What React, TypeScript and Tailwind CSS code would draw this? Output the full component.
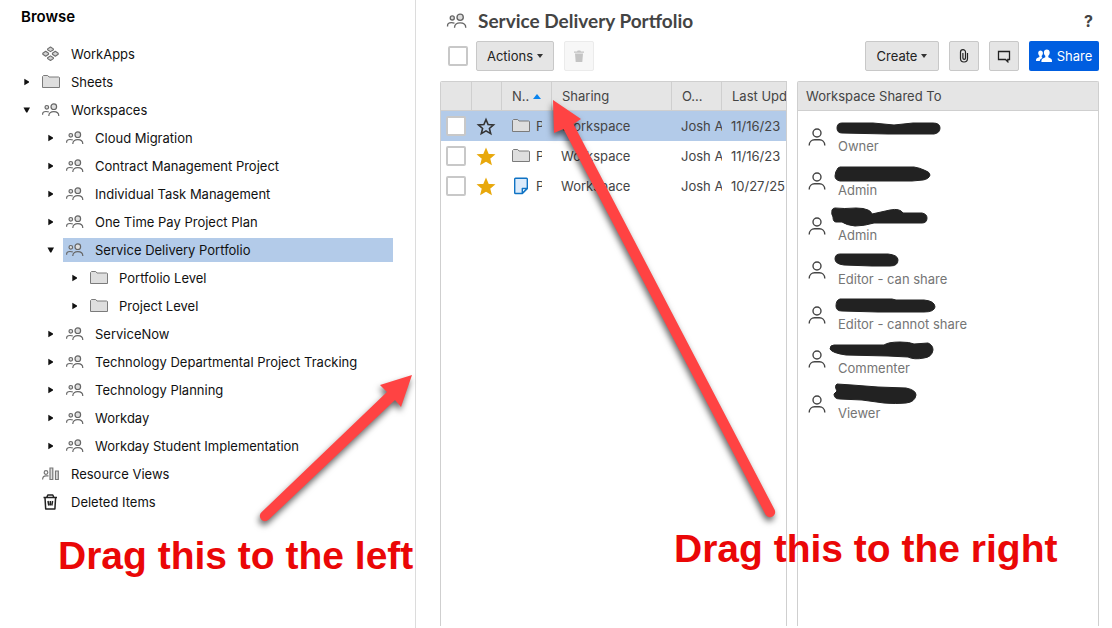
import { ReactNode } from 'react';

type IconName = 'apps' | 'folder' | 'people' | 'resource' | 'trash';

type TreeNode = {
    label: string;
    icon: IconName;
    state?: 'open' | 'closed';
    selected?: boolean;
    children?: TreeNode[];
};

type SheetRow = {
    id: number;
    starred: boolean;
    selected?: boolean;
    kind: 'folder' | 'sheet';
    updated: string;
};

type Member = {
    id: number;
    role: string;
    mark: string;
};

const STYLES = {
    button: 'flex h-[30px] items-center justify-center rounded-xs border border-[#c8c8c8] bg-[#e5e5e5] text-[#222]',
    checkbox: 'block size-5 appearance-none rounded-xs border-2 border-[#c8c8c8] bg-white',
    headCell: 'h-[29px] overflow-hidden border-r border-b border-[#cfcfcf] bg-[#e5e5e5] text-left font-normal whitespace-nowrap',
    bodyCell: 'h-[30px] overflow-hidden whitespace-nowrap',
};

const tree: TreeNode[] = [
    { label: 'WorkApps', icon: 'apps' },
    { label: 'Sheets', icon: 'folder', state: 'closed' },
    {
        label: 'Workspaces',
        icon: 'people',
        state: 'open',
        children: [
            { label: 'Cloud Migration', icon: 'people', state: 'closed' },
            { label: 'Contract Management Project', icon: 'people', state: 'closed' },
            { label: 'Individual Task Management', icon: 'people', state: 'closed' },
            { label: 'One Time Pay Project Plan', icon: 'people', state: 'closed' },
            {
                label: 'Service Delivery Portfolio',
                icon: 'people',
                state: 'open',
                selected: true,
                children: [
                    { label: 'Portfolio Level', icon: 'folder', state: 'closed' },
                    { label: 'Project Level', icon: 'folder', state: 'closed' },
                ],
            },
            { label: 'ServiceNow', icon: 'people', state: 'closed' },
            { label: 'Technology Departmental Project Tracking', icon: 'people', state: 'closed' },
            { label: 'Technology Planning', icon: 'people', state: 'closed' },
            { label: 'Workday', icon: 'people', state: 'closed' },
            { label: 'Workday Student Implementation', icon: 'people', state: 'closed' },
        ],
    },
    { label: 'Resource Views', icon: 'resource' },
    { label: 'Deleted Items', icon: 'trash' },
];

const rows: SheetRow[] = [
    { id: 1, starred: false, selected: true, kind: 'folder', updated: '11/16/23' },
    { id: 2, starred: true, kind: 'folder', updated: '11/16/23' },
    { id: 3, starred: true, kind: 'sheet', updated: '10/27/25' },
];

// Names are blacked out, each with its own marker stroke
const members: Member[] = [
    { id: 1, role: 'Owner', mark: 'M14 8Q9 8 9 13Q9 18 14 18L60 19L106 19Q112 18 112 13Q112 8 105 8L85 8L66 10L45 8Z' },
    { id: 2, role: 'Admin', mark: 'M12 8L86 8Q92 9 96 11Q102 13 102 16Q101 20 95 21L84 22L12 22Q7 21 7 17Q7 13 10 9Z' },
    { id: 3, role: 'Admin', mark: 'M7 4Q16 5 28 4Q36 4 40 6Q43 7 44 10L62 6Q72 4 75 9L94 9Q99 10 99 14Q99 19 94 19L46 19Q36 22 27 22Q18 21 14 18L8 18Q5 18 5 13Q3 10 4 6Q5 4 7 4Z' },
    { id: 4, role: 'Editor - can share', mark: 'M12 6L60 6Q70 7 70 12Q70 18 62 18L44 18L16 17Q7 16 7 11Q7 6 12 6Z' },
    { id: 5, role: 'Editor - cannot share', mark: 'M12 6L64 6L68 7L96 7Q107 8 107 14Q106 19 96 19L50 19L14 18Q8 18 8 13Q8 7 12 6Z' },
    { id: 6, role: 'Commenter', mark: 'M6 8L56 8Q60 5 72 5Q82 5 86 7L100 6Q105 8 105 13Q104 20 96 21Q86 23 80 20L60 19L18 18Q4 16 2 12Q2 8 6 8Z' },
    { id: 7, role: 'Viewer', mark: 'M9 2L24 3L50 5L78 6Q88 8 88 13Q87 20 78 21Q68 22 56 21L34 18L12 17Q6 17 6 12L9 9Q6 4 9 2Z' },
];

function FolderIcon() {
    return (
        <svg className="h-4 w-[18px] shrink-0" viewBox="0 0 18 16" fill="#dedede" stroke="#7b7b7b">
            <path d="M.5 13.500v-11l1-1h4.200l1.300 1.500h9.500l1 .5v10z" />
        </svg>
    );
}

function PeopleIcon({ className = 'h-4 w-[18px]' }: { className?: string }) {
    return (
        <svg className={`${className} shrink-0`} viewBox="0 0 18 16" fill="none" stroke="#666" strokeWidth="1.200">
            <circle cx="4.800" cy="5.300" r="1.800" fill="#dedede" />
            <circle cx="11.800" cy="4.700" r="2.800" fill="#dedede" />
            <path d="M.6 12.800v-.6c0-1.900 1.500-2.700 3.400-2.700 1.200 0 2 .1 2.800.5M6.800 14c0-3 2.100-4.300 5-4.300s5 1.300 5 4.300" />
        </svg>
    );
}

function TreeIcon({ name }: { name: IconName }) {
    if (name === 'folder') return <FolderIcon />;
    if (name === 'people') return <PeopleIcon />;
    if (name === 'apps') {
        return (
            <svg className="h-4 w-[18px] shrink-0" viewBox="0 0 18 16" fill="#d4d4d4" stroke="#6e6e6e" strokeWidth="1.100" strokeLinejoin="round">
                <path d="M8.500 1l2.900 1.900v.8L8.500 5.600 5.600 3.700v-.8zM3.700 5.300l2.900 2v.9l-2.900 2-2.900-2v-.9zM13.300 5.300l2.900 2v.9l-2.900 2-2.900-2v-.9zM8.500 9.900l2.900 1.900v.8l-2.900 1.900-2.900-1.900v-.8z" />
            </svg>
        );
    }
    if (name === 'resource') {
        return (
            <svg className="h-4 w-[18px] shrink-0" viewBox="0 0 18 16" fill="none" stroke="#777" strokeWidth="1.200">
                <circle cx="4" cy="6.500" r="1.800" />
                <path d="M.6 13.500c0-2.800 1.200-3.700 3.400-3.700h2.500" />
                <path d="M8 2h2.800v11.500H8zM13.500 5h2.800v8.500h-2.800z" fill="#dedede" />
            </svg>
        );
    }
    return (
        <svg className="h-[18px] w-[18px] shrink-0" viewBox="0 0 18 18" fill="none" stroke="#222" strokeWidth="1.500" strokeLinejoin="round">
            <path d="M1.500 4.500h13.500M4.800 4.200l1-2.200h5l1 2.200M3 4.700l.7 11.300h9.200L13.600 4.700M6 8l.8 4.500M8.300 8v4.500M10.600 8l-.8 4.500" />
        </svg>
    );
}

function TreeItem({ node }: { node: TreeNode }) {
    return (
        <li className="space-y-1">
            <div className="flex h-6 items-center gap-1">
                {node.state ? (
                    <button type="button" aria-label={`Toggle ${node.label}`} className="flex size-4 shrink-0 items-center justify-center">
                        <svg className="size-2" viewBox="0 0 8 8" fill="#111">
                            <path d={node.state === 'open' ? 'M.5 1.500h6.500L4.300 6.500H3.200z' : 'M1.300 .8v6.400l4.700-2.700v-1z'} />
                        </svg>
                    </button>
                ) : (
                    <span className="w-4 shrink-0" />
                )}
                <a href="#" className={`flex h-6 min-w-0 flex-1 items-center gap-[11px] pl-[3px] whitespace-nowrap ${node.selected ? 'bg-[#b3cbe9]' : ''}`}>
                    <TreeIcon name={node.icon} />
                    {node.label}
                </a>
            </div>
            {node.children && (
                <ul className="space-y-1 pl-6">
                    {node.children.map((child) => (
                        <TreeItem key={child.label} node={child} />
                    ))}
                </ul>
            )}
        </li>
    );
}

function Caret() {
    return (
        <svg className="h-1.5 w-1.5" viewBox="0 0 6 6" fill="#333">
            <path d="M0 1h6L3 5z" />
        </svg>
    );
}

function ToolButton({ label, children }: { label: string; children: ReactNode }) {
    return (
        <button type="button" aria-label={label} className={`${STYLES.button} w-[30px]`}>
            {children}
        </button>
    );
}

function SheetTable() {
    return (
        <div className="min-w-0 flex-1 overflow-hidden rounded-tl-xs border-t border-r border-l border-[#cfcfcf]">
            <table className="w-[400px] table-fixed border-separate border-spacing-0 text-[#444]">
                <colgroup>
                    <col className="w-[31px]" />
                    <col className="w-[30px]" />
                    <col className="w-[50px]" />
                    <col className="w-[120px]" />
                    <col className="w-[50px]" />
                    <col />
                </colgroup>
                <thead>
                    <tr>
                        <th className={STYLES.headCell} />
                        <th className={STYLES.headCell} />
                        <th className={`${STYLES.headCell} pl-2.5`}>
                            <span className="flex items-center gap-1">
                                N..
                                <svg className="h-2 w-2" viewBox="0 0 8 8" fill="#0a84ee">
                                    <path d="M0 7l4-5 4 5z" />
                                </svg>
                            </span>
                        </th>
                        <th className={`${STYLES.headCell} pl-2.5`}>Sharing</th>
                        <th className={`${STYLES.headCell} pl-2.5`}>O...</th>
                        <th className={`${STYLES.headCell} pl-2.5`}>Last Upd</th>
                    </tr>
                </thead>
                <tbody>
                    {rows.map((row) => (
                        <tr key={row.id} className={row.selected ? 'bg-[#b3cbe9]' : ''}>
                            <td className={`${STYLES.bodyCell} pl-[5px]`}>
                                <input type="checkbox" aria-label={`Select row ${row.id}`} className={STYLES.checkbox} />
                            </td>
                            <td className={`${STYLES.bodyCell} pl-1`}>
                                <button type="button" aria-label="Favorite" className="block">
                                    <svg
                                        className="size-5"
                                        viewBox="0 0 20 20"
                                        fill={row.starred ? '#e8a80c' : 'none'}
                                        stroke={row.starred ? '#e8a80c' : '#333'}
                                        strokeWidth="1.600"
                                    >
                                        <path d="M10 3.500l2.100 5 5.400.4-4.100 3.600 1.300 5.200L10 14.900l-4.700 2.800 1.300-5.200L2.500 8.900l5.400-.4z" />
                                    </svg>
                                </button>
                            </td>
                            <td className={`${STYLES.bodyCell} pr-2.5 pl-2.5`}>
                                <span className="flex items-center gap-1.5 overflow-hidden">
                                    {row.kind === 'folder' ? (
                                        <FolderIcon />
                                    ) : (
                                        <svg className="size-[18px] shrink-0" viewBox="0 0 18 18" fill="#dcebfb" stroke="#0f73c4" strokeWidth="1.400" strokeLinejoin="round">
                                            <path d="M3.500 1.200h11q.8 0 .8.8v9.500l-5 5H3.500q-.8 0-.8-.8V2q0-.8.8-.8z" />
                                            <path d="M10.300 16.300v-4.800h4.800z" fill="#fff" />
                                        </svg>
                                    )}
                                    P
                                </span>
                            </td>
                            <td className={`${STYLES.bodyCell} pl-[9px]`}>Workspace</td>
                            <td className={`${STYLES.bodyCell} pl-[9px]`}>Josh A</td>
                            <td className={`${STYLES.bodyCell} pl-[9px]`}>{row.updated}</td>
                        </tr>
                    ))}
                </tbody>
            </table>
        </div>
    );
}

function SharedPanel() {
    return (
        <aside className="w-[302px] shrink-0 rounded-t-xs border-t border-r border-l border-[#cfcfcf]">
            <h2 className="flex h-[29px] items-center border-b border-[#cfcfcf] bg-[#e5e5e5] pl-2 text-[#444]">Workspace Shared To</h2>
            <ul className="mt-1 grid h-[311px] auto-rows-fr pl-2.5">
                {members.map((member) => (
                    <li key={member.id} className="flex gap-0.5">
                        <svg className="mt-3 h-5 w-[18px] shrink-0" viewBox="0 0 18 20" fill="none" stroke="#444" strokeWidth="1.400">
                            <circle cx="9" cy="6" r="4" />
                            <path d="M1.200 18.500c0-4 2.800-5.700 5.300-5.700h5c2.500 0 5.300 1.700 5.300 5.700" />
                        </svg>
                        <div>
                            <svg className="block h-[22px] w-[120px] overflow-visible" viewBox="0 0 120 22" fill="#222" stroke="#222" strokeLinejoin="round">
                                <path d={member.mark} />
                            </svg>
                            <p className="pl-2.5 leading-[18px] text-[#757575]">{member.role}</p>
                        </div>
                    </li>
                ))}
            </ul>
        </aside>
    );
}

// Red callouts that float above the page
function Annotations() {
    return (
        <div className="pointer-events-none absolute inset-0 overflow-hidden font-['Liberation_Sans',Arial,sans-serif] text-[39px] leading-[46px] font-bold whitespace-nowrap text-[#ea0707]">
            <svg className="absolute top-0 left-0 h-[628px] w-[1112px] drop-shadow-[-1px_4px_3px_rgba(0,0,0,0.6)]" viewBox="0 0 1112 628" fill="#ff4343">
                <path d="M412 375L401 407L395 400L268.500 519.800A5 5 0 0 1 261.500 512.200L387 392L380 385Z" />
                <path d="M553 100L581 119L573.500 124L774.500 509.500A5 5 0 0 1 765.500 514.500L563.500 129L554 133Z" />
            </svg>
            <p className="absolute top-[533px] left-[58px]">Drag this to the left</p>
            <p className="absolute top-[526px] left-[674px]">Drag this to the right</p>
        </div>
    );
}

export default function App() {
    return (
        <div className="relative flex min-h-screen bg-white pb-0.5 font-[Inter,sans-serif] text-[13px] leading-5 text-[#111]">
            <nav className="-mb-0.5 w-[416px] shrink-0 border-r border-[#dcdcdc] pr-[22px] pl-[19px]">
                <h2 className="pt-[7px] pl-0.5 text-[15px] leading-5 font-semibold text-black">Browse</h2>
                <ul className="mt-[15px] space-y-1">
                    {tree.map((node) => (
                        <TreeItem key={node.label} node={node} />
                    ))}
                </ul>
            </nav>

            <main className="flex min-w-0 flex-1 flex-col pr-[13px] pl-6">
                <header className="flex h-[41px] items-center justify-between pr-1.5 pl-1.5">
                    <div className="flex items-center gap-2.5">
                        <PeopleIcon className="h-[18px] w-[22px]" />
                        <h1 className="font-[Lato,sans-serif] text-[19px] leading-5 font-bold text-[#444]">Service Delivery Portfolio</h1>
                    </div>
                    <button type="button" aria-label="Help" className="text-base font-bold text-[#444]">?</button>
                </header>

                <div className="flex items-center pl-2">
                    <input type="checkbox" aria-label="Select all" className={`${STYLES.checkbox} mr-2`} />
                    <button type="button" className={`${STYLES.button} w-[78px] gap-1`}>
                        Actions <Caret />
                    </button>
                    <button type="button" disabled aria-label="Delete" className="ml-2.5 flex size-[30px] items-center justify-center rounded-xs border border-[#ebebeb] bg-[#f7f7f7]">
                        <svg className="h-3 w-3" viewBox="0 0 12 12" fill="#c4c4c4">
                            <path d="M1 1.500h3L4.700.5h2.600l.7 1h3v1.300H1zM2 3.600h8L9.300 12H2.700z" />
                        </svg>
                    </button>
                    <div className="ml-auto flex gap-2.5">
                        <button type="button" className={`${STYLES.button} w-[74px] gap-1`}>
                            Create <Caret />
                        </button>
                        <ToolButton label="Attachments">
                            <svg className="h-3.5 w-2.5" viewBox="0 0 10 14" fill="none" stroke="#222" strokeWidth="1.200">
                                <path d="M8.500 4v5.500a3.500 3.500 0 0 1-7 0V3.200a2.500 2.500 0 0 1 5 0V9a1.300 1.300 0 0 1-2.600 0V4" />
                            </svg>
                        </ToolButton>
                        <ToolButton label="Comments">
                            <svg className="h-3.5 w-3.5" viewBox="0 0 14 14" fill="none" stroke="#222" strokeWidth="1.300">
                                <path d="M1.500 2.500h11v8h-1.700v2.300L8.500 10.500h-7z" />
                            </svg>
                        </ToolButton>
                        <button type="button" className="flex h-[30px] w-[70px] items-center justify-center gap-[5px] rounded-xs bg-[#005ee0] text-white">
                            <svg className="h-4 w-4" viewBox="0 0 16 16" fill="#fff">
                                <path d="M4.500 2.500c-1.400 0-2.300 1-2.300 2.400 0 1.200.5 2.200 1.200 2.800v1.200L1.200 10C.3 10.400 0 11.200 0 13h3.800c.1-1.400.7-2 1.700-2.500l1-.5-.8-1.100V7.700c.8-.6 1.200-1.600 1.200-2.800 0-1.400-1-2.400-2.400-2.400z" />
                                <path d="M10.800 1.500c-1.800 0-2.900 1.200-2.900 3 0 1.400.6 2.600 1.400 3.300v1.500l-2.500 1.200c-1 .5-1.400 1.300-1.400 3.500H16c0-2.200-.3-3-1.300-3.500l-2.400-1.200V7.800c.8-.7 1.400-1.900 1.400-3.300 0-1.800-1.100-3-2.900-3z" />
                            </svg>
                            Share
                        </button>
                    </div>
                </div>

                <div className="mt-2.5 flex flex-1 gap-2.5">
                    <SheetTable />
                    <SharedPanel />
                </div>
            </main>

            <Annotations />
        </div>
    );
}
